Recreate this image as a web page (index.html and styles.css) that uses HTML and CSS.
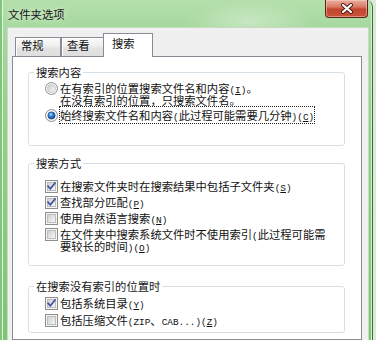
FILE: index.html
```html
<!DOCTYPE html>
<html lang="zh-CN">
<head>
<meta charset="utf-8">
<title>文件夹选项</title>
<link rel="stylesheet" href="styles.css">
</head>
<body>
<svg class="defs" width="0" height="0" aria-hidden="true">
  <defs>
    <linearGradient id="boxbg" x1="0" y1="0" x2="1" y2="1">
      <stop offset="0" stop-color="#cfcfcf"/>
      <stop offset="1" stop-color="#f7f7f7"/>
    </linearGradient>
    <linearGradient id="radbg" x1="0" y1="0" x2="1" y2="1">
      <stop offset="0" stop-color="#c9c9c9"/>
      <stop offset="1" stop-color="#fbfbfb"/>
    </linearGradient>
    <radialGradient id="dot" cx="0.4" cy="0.35" r="0.7">
      <stop offset="0" stop-color="#a8dcff"/>
      <stop offset="0.45" stop-color="#2f7fd0"/>
      <stop offset="1" stop-color="#153f7c"/>
    </radialGradient>
    <symbol id="cb-off" viewBox="0 0 13 13">
      <rect x="0.5" y="0.5" width="12" height="12" fill="#f5f5f5" stroke="#8e8f8f"/>
      <rect x="2.5" y="2.5" width="8" height="8" fill="url(#boxbg)" stroke="#bdbdbd"/>
    </symbol>
    <symbol id="cb-on" viewBox="0 0 13 13">
      <rect x="0.5" y="0.5" width="12" height="12" fill="#f5f5f5" stroke="#8e8f8f"/>
      <rect x="2.5" y="2.5" width="8" height="8" fill="url(#boxbg)" stroke="#bdbdbd"/>
      <path d="M3 6.2 L5.4 8.8 L10.2 2.8" fill="none" stroke="#3f4fa4" stroke-width="1.7" stroke-linecap="round" stroke-linejoin="round"/>
    </symbol>
    <symbol id="rd-off" viewBox="0 0 13 13">
      <circle cx="6.5" cy="6.5" r="6" fill="#f4f4f4" stroke="#8e8f8f"/>
      <circle cx="6.5" cy="6.5" r="4" fill="url(#radbg)" stroke="#c4c4c4" stroke-width="0.8"/>
    </symbol>
    <symbol id="rd-on" viewBox="0 0 13 13">
      <circle cx="6.5" cy="6.5" r="6" fill="#f4f4f4" stroke="#8e8f8f"/>
      <circle cx="6.5" cy="6.5" r="3.6" fill="url(#dot)" stroke="#1e4f8e" stroke-width="0.8"/>
    </symbol>
  </defs>
</svg>

<div class="window">
  <div class="titlebar">
    <span class="title">文件夹选项</span>
    <div class="close">
      <svg width="14" height="11" viewBox="0 0 14 11" aria-hidden="true">
        <path d="M3 2 L11 9 M11 2 L3 9" stroke="#4a1a12" stroke-width="4" stroke-linecap="round"/>
        <path d="M3 2 L11 9 M11 2 L3 9" stroke="#ffffff" stroke-width="2.2" stroke-linecap="round"/>
      </svg>
    </div>
  </div>

  <div class="client">
    <div class="tabs">
      <div class="tab tab-general">常规</div>
      <div class="tab tab-view">查看</div>
      <div class="tab tab-active">搜索</div>
    </div>

    <div class="page">
      <fieldset class="group group-content">
        <legend>搜索内容</legend>
        <div class="opts opts-radio">
          <div class="opt">
            <svg class="ico"><use href="#rd-off"/></svg>
            <span class="txt">在有索引的位置搜索文件名和内容<span class="lat">(<u>I</u>)</span>。<br>在没有索引的位置，只搜索文件名。</span>
          </div>
          <div class="opt">
            <svg class="ico"><use href="#rd-on"/></svg>
            <span class="txt"><span class="focus">始终搜索文件名和内容<span class="lat">(</span>此过程可能需要几分钟<span class="lat">)(<u>C</u>)</span></span></span>
          </div>
        </div>
      </fieldset>

      <fieldset class="group group-method">
        <legend>搜索方式</legend>
        <div class="opts opts-method">
          <div class="opt">
            <svg class="ico"><use href="#cb-on"/></svg>
            <span class="txt">在搜索文件夹时在搜索结果中包括子文件夹<span class="lat">(<u>S</u>)</span></span>
          </div>
          <div class="opt">
            <svg class="ico"><use href="#cb-on"/></svg>
            <span class="txt">查找部分匹配<span class="lat">(<u>P</u>)</span></span>
          </div>
          <div class="opt">
            <svg class="ico"><use href="#cb-off"/></svg>
            <span class="txt">使用自然语言搜索<span class="lat">(<u>N</u>)</span></span>
          </div>
          <div class="opt">
            <svg class="ico"><use href="#cb-off"/></svg>
            <span class="txt">在文件夹中搜索系统文件时不使用索引<span class="lat">(</span>此过程可能需<br>要较长的时间<span class="lat">)(<u>O</u>)</span></span>
          </div>
        </div>
      </fieldset>

      <fieldset class="group group-noindex">
        <legend>在搜索没有索引的位置时</legend>
        <div class="opts opts-noindex">
          <div class="opt">
            <svg class="ico"><use href="#cb-on"/></svg>
            <span class="txt">包括系统目录<span class="lat">(<u>Y</u>)</span></span>
          </div>
          <div class="opt">
            <svg class="ico"><use href="#cb-off"/></svg>
            <span class="txt">包括压缩文件<span class="lat">(ZIP</span>、<span class="lat">CAB...)(<u>Z</u>)</span></span>
          </div>
        </div>
      </fieldset>
    </div>
  </div>
</div>
</body>
</html>
```

FILE: styles.css
```css
html, body {
  margin: 0;
  height: 340px;
  overflow: hidden;
  background: #d9ebd6;
}

body {
  font-family: "Noto Sans CJK SC", "Noto Sans", sans-serif;
  font-size: 11.3px;
  line-height: 12px;
  color: #111;
}

.defs {
  display: block;
  width: 0;
  height: 0;
  overflow: hidden;
}

.window {
  width: 373px;
  height: 340px;
  box-sizing: border-box;
  padding: 0 4px 0 8px;
  border-right: 1px solid #3d6a39;
  border-top-right-radius: 7px;
  display: flex;
  flex-direction: column;
  background:
    radial-gradient(ellipse 90px 30px at 250px 22px, rgba(255,255,255,0.35), rgba(255,255,255,0) 70%),
    linear-gradient(180deg, #b4dfac 0px, #a6d99e 28px, #93d08b 120px, #7cc673 340px);
  box-shadow: inset 2px 0 0 #80c678, inset 3px 0 0 #e8f5e5, inset -1px 0 0 #d6efd2;
}

.titlebar {
  height: 28px;
  display: flex;
  align-items: flex-start;
  flex: none;
}

.title {
  margin-top: 8px;
  color: #141414;
  text-shadow: 0 0 6px rgba(255,255,255,0.9);
}

.close {
  margin-left: auto;
  width: 43px;
  height: 18px;
  box-sizing: border-box;
  border: 1px solid #5c2118;
  border-top: none;
  border-radius: 0 0 4px 4px;
  background: linear-gradient(180deg, #eab0a2 0%, #d97b66 40%, #c34530 55%, #c8553a 100%);
  box-shadow: inset 0 0 0 1px rgba(255,220,210,0.45);
  display: flex;
  align-items: center;
  justify-content: center;
}

.client {
  flex: 1;
  background: #f0f0f0;
  padding: 5px 6px 0 4px;
  box-shadow: 0 0 0 1px #c6dbc2;
  display: flex;
  flex-direction: column;
}

.tabs {
  height: 23px;
  display: flex;
  align-items: flex-end;
  padding-left: 3px;
  flex: none;
}

.tab {
  box-sizing: border-box;
  height: 19px;
  border: 1px solid #898c95;
  border-bottom: none;
  padding: 1px 0 0 5px;
  background: linear-gradient(180deg, #fbfbfb 0%, #eeeeee 45%, #e3e3e3 55%, #dedede 100%);
  box-shadow: inset 1px 1px 0 #ffffff;
}

.tab-general {
  width: 46px;
}

.tab-view {
  width: 44px;
}

.tab-active {
  width: 50px;
  height: 24px;
  margin: 0 -2px -1px -2px;
  padding: 3px 0 0 8px;
  background: #ffffff;
  box-shadow: none;
  position: relative;
  z-index: 1;
}

.page {
  flex: 1;
  background: #ffffff;
  border: 1px solid #898c95;
  padding: 9px 16px 0 15px;
}

.group {
  margin: 0;
  min-width: 0;
  border: 1px solid #d5dfe5;
  border-radius: 3px;
  padding: 4px 8px 24px 5px;
}

.group legend {
  padding: 0 2px;
  height: 12px;
  line-height: 12px;
  color: #151515;
}

.group-method {
  margin-top: 11px;
  padding-top: 11px;
  padding-bottom: 13px;
}

.group-noindex {
  margin-top: 14px;
  padding-top: 5px;
  padding-bottom: 6px;
}

.opts {
  display: flex;
  flex-direction: column;
}

.opts-radio {
  gap: 3px;
}

.opts-method {
  gap: 4px;
}

.opts-noindex {
  gap: 5px;
}

.opt {
  display: flex;
  align-items: flex-start;
  margin-left: 11px;
}

.ico {
  width: 13px;
  height: 13px;
  flex: none;
  margin: 0 2px -1px 0;
}

.txt {
  display: block;
  line-height: 12px;
}

.lat {
  font-family: "Liberation Mono", "DejaVu Sans Mono", monospace;
  font-size: 9.4px;
  line-height: 0;
}

.focus {
  outline: 1px dotted #222;
  outline-offset: 0;
}
```
